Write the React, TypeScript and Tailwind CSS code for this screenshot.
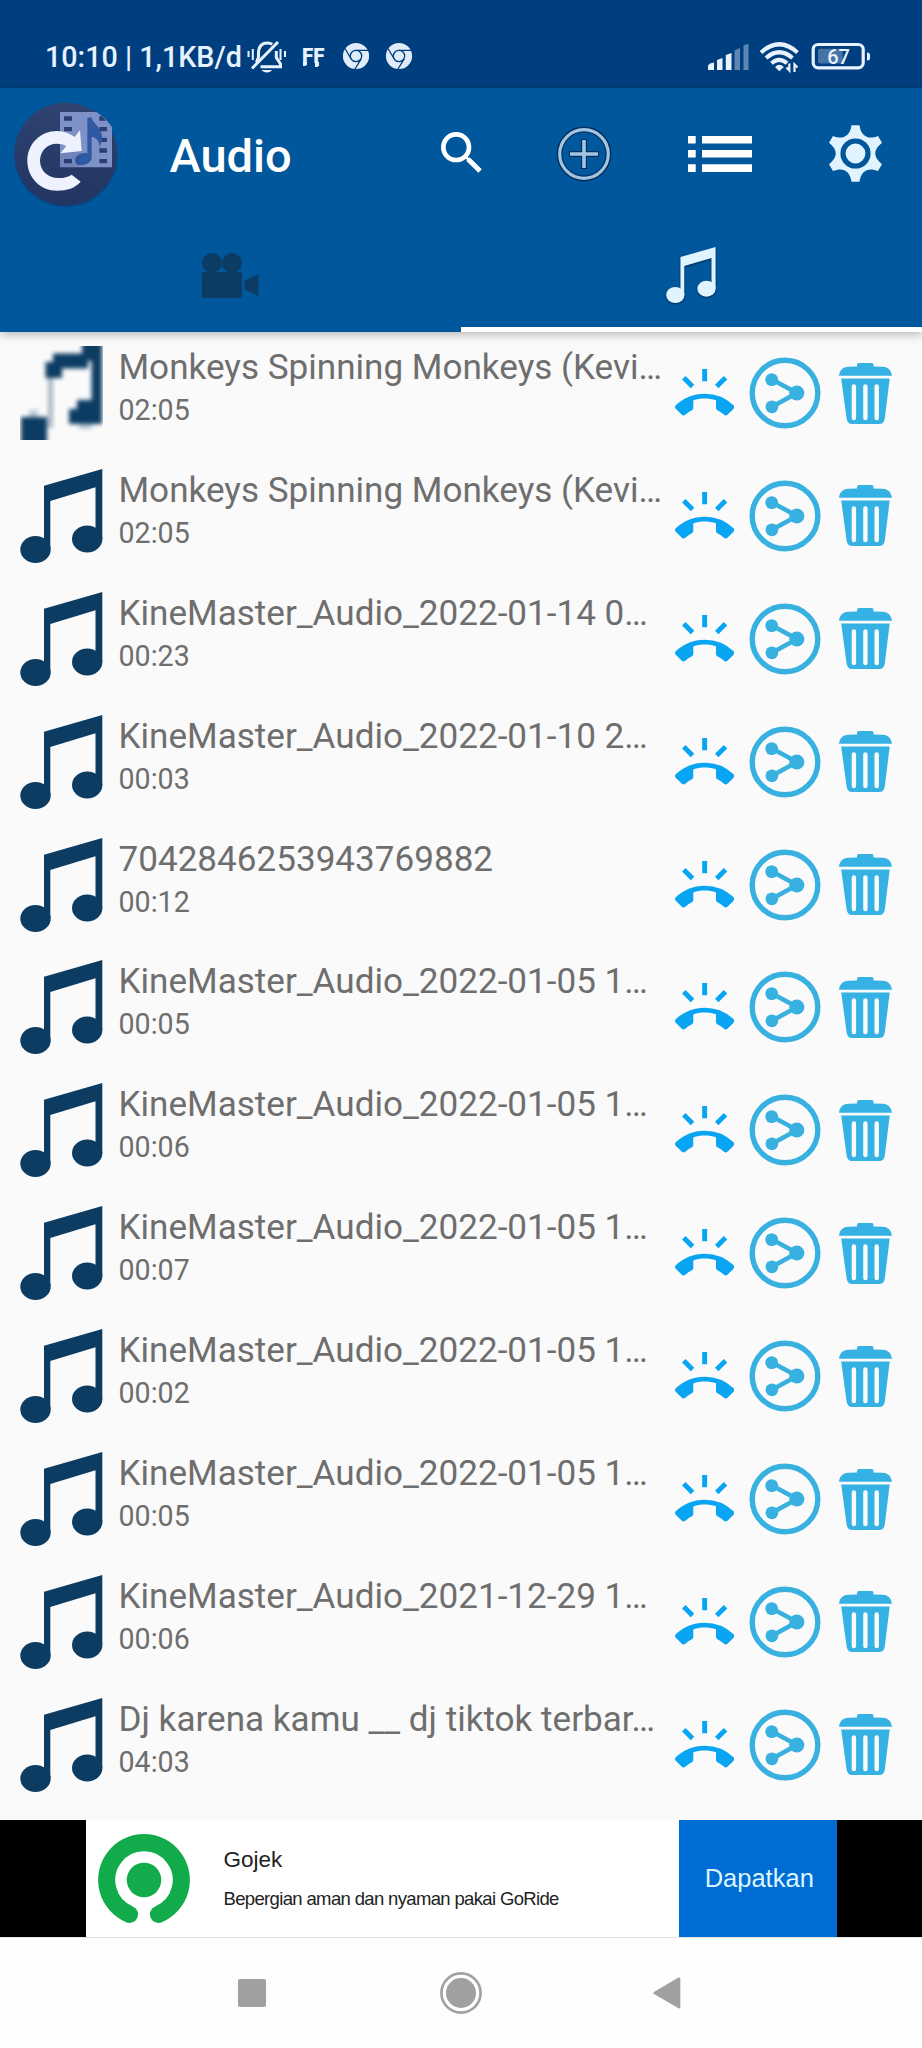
import React from "react";
import { MdRingVolume, MdSearch } from "react-icons/md";

type Track = { title: string; duration: string; lowRes?: boolean };

const tracks: Track[] = [
  { title: "Monkeys Spinning Monkeys (Kevi…", duration: "02:05", lowRes: true },
  { title: "Monkeys Spinning Monkeys (Kevi…", duration: "02:05" },
  { title: "KineMaster_Audio_2022-01-14 0…", duration: "00:23" },
  { title: "KineMaster_Audio_2022-01-10 2…", duration: "00:03" },
  { title: "7042846253943769882", duration: "00:12" },
  { title: "KineMaster_Audio_2022-01-05 1…", duration: "00:05" },
  { title: "KineMaster_Audio_2022-01-05 1…", duration: "00:06" },
  { title: "KineMaster_Audio_2022-01-05 1…", duration: "00:07" },
  { title: "KineMaster_Audio_2022-01-05 1…", duration: "00:02" },
  { title: "KineMaster_Audio_2022-01-05 1…", duration: "00:05" },
  { title: "KineMaster_Audio_2021-12-29 1…", duration: "00:06" },
  { title: "Dj karena kamu __ dj tiktok terbar…", duration: "04:03" },
];

const NoteIcon: React.FC<{ className?: string }> = ({ className }) => (
  <svg viewBox="0 0 83 94" preserveAspectRatio="none" className={className} fill="currentColor">
    <path d="M24 16.7 82.3 0V70H75.5V18.3L30.3 32V80.5H24Z" />
    <ellipse cx="15.5" cy="80.5" rx="15.2" ry="13.5" />
    <ellipse cx="67.2" cy="70" rx="15.2" ry="13.4" />
  </svg>
);

const LowResNote: React.FC = () => (
  <svg viewBox="0 0 83 94" className="w-[83px] h-[94px] shrink-0" fill="#0d3c63">
    <g className="blur-[2px]">
      <path d="M62 -4H82V78H49V63H57V54H71.5V15H68V22.500H42V32H25.500V16H33V7.500H62Z" />
      <path d="M1 71H27V98H1Z" />
      <path d="M28 32H33V82H28Z" opacity=".35" />
      <path d="M9 64H18V71H9ZM59 78H72V83H59Z" opacity=".25" />
    </g>
  </svg>
);

const ShareIcon: React.FC = () => (
  <svg viewBox="0 0 72 72" className="w-[72px] h-[72px]" fill="#38b1e0" stroke="#38b1e0">
    <circle cx="36" cy="36" r="32.8" fill="none" strokeWidth="5.4" />
    <path d="M23 22.5 48 36 23 49.8" fill="none" strokeWidth="4.6" />
    <circle cx="22.7" cy="22.6" r="6.4" stroke="none" />
    <circle cx="22.9" cy="49.8" r="6.4" stroke="none" />
    <circle cx="47.8" cy="36" r="7.6" stroke="none" />
  </svg>
);

const TrashIcon: React.FC = () => (
  <svg viewBox="0 0 53 61" className="w-[53px] h-[61px]" fill="#35b2e3">
    <path d="M0 12.8C.6 7 4 3.9 9 3.7L18 3.5V2Q18 0 20 0H33Q34.5 0 34.5 2V3.5L44 3.7C49 3.9 52.2 7 53 12.8Z" />
    <path
      fillRule="evenodd"
      d="M2.2 15.5H50.7L45.8 55.5Q45 61 40 61H13Q8.6 61 7.6 55.5ZM12.7 23.5V55A2.2 2.2 0 0 0 17.1 55V23.5A2.2 2.2 0 0 0 12.7 23.5ZM24.2 23.5V55A2.2 2.2 0 0 0 28.6 55V23.5A2.2 2.2 0 0 0 24.2 23.5ZM35.5 23.5V55A2.2 2.2 0 0 0 39.9 55V23.5A2.2 2.2 0 0 0 35.5 23.5Z"
    />
  </svg>
);

const TrackRow: React.FC<{ track: Track }> = ({ track }) => (
  <div className="flex items-start h-[122.9px] pl-5">
    {track.lowRes ? <LowResNote /> : <NoteIcon className="w-[83px] h-[94px] shrink-0 text-[#0d3c63]" />}
    <div className="w-[555px] pl-[15.5px] whitespace-nowrap text-[#6e6e6e]">
      <div className="text-[35.1px] leading-[42px]">{track.title}</div>
      <div className="text-[28.6px] leading-[44px]">{track.duration}</div>
    </div>
    <MdRingVolume className="w-[59.3px] h-[59.3px] mt-[18px] ml-[17px] shrink-0 text-[#09a5f3]" />
    <div className="mt-[11px] ml-[14.5px] shrink-0">
      <ShareIcon />
    </div>
    <div className="mt-[16.5px] ml-[18.2px] shrink-0">
      <TrashIcon />
    </div>
  </div>
);

const MutedBell: React.FC = () => (
  <svg viewBox="246 38 42 38" className="w-[42px] h-[38px]" fill="none" stroke="#e8f2ff" strokeWidth="3">
    <path d="M256.5 62.5 258.5 57V53.5C258.5 46.5 262 43 267.5 43 269.5 43 271 43.5 272.2 44.3" />
    <path d="M276.3 51V57.5L280.5 64V66.8H260.5" />
    <path d="M252 68.5 278 42" />
    <path d="M261.5 70H272C270.5 73.2 263.500 73.2 261.5 70Z" fill="#e8f2ff" stroke="none" />
    <path d="M248.5 51V57M252.8 49V60M280.5 49V60M285 51V57" strokeWidth="2" />
  </svg>
);

const ChromeMark: React.FC = () => (
  <svg viewBox="-14 -14 28 28" className="w-[28px] h-[28px]">
    <circle r="13.1" fill="#e0ecf8" />
    <g stroke="#003f7f" strokeWidth="1.3" fill="none">
      <circle r="5.7" />
      <path d="M-.5 -5.7H12M-4.8 3-11 -7.5M5.2 2.8-1 13" />
    </g>
  </svg>
);

const StatusIcons: React.FC = () => (
  <svg viewBox="706 38 168 38" className="w-[168px] h-[38px]" fill="#e8f2ff">
    <path d="M708 65.5 710 63.5 714 62.5V70H708ZM717 60 722.5 58V70H717ZM725.8 55 731.5 53V70H725.8Z" />
    <path d="M734.5 50.5 740 48V70H734.5ZM743.5 45.5 748.5 43.5V70H743.5Z" opacity=".4" />
    <g fill="none" stroke="#e8f2ff" strokeWidth="4.1">
      <path d="M761 52.5Q779.3 36 797.5 52.5" />
      <path d="M766 58Q779.3 46.5 792.5 58" />
      <path d="M771.5 63.2Q779.3 56.5 787 63.2" />
      <path d="M789.3 63.500V70.5L786.5 67.5M794.5 72V64.5L797.5 67.5" strokeWidth="2.2" />
    </g>
    <path d="M775 67Q779.3 62.5 783.8 67L779.3 71.2Z" />
    <rect x="813.2" y="44.5" width="50" height="23.3" rx="5" fill="none" stroke="#e8f2ff" strokeWidth="3.2" />
    <path d="M820 48.7H842.7V63.5H820Q818 63.5 818 61.5V50.7Q818 48.7 820 48.7Z" opacity=".3" />
    <path d="M867 52.5Q870 52.5 870 55V58Q870 60.5 867 60.5Z" />
    <text x="838.5" y="64" textAnchor="middle" className="text-[20px] font-medium">67</text>
  </svg>
);

const StatusBar: React.FC = () => (
  <div className="flex items-start h-[88px] pt-[38px] bg-[#003f7f] text-[#e8f2ff]">
    <div className="w-[201px] ml-[45px] text-[28.7px] leading-[39px] font-medium whitespace-nowrap">
      10:10 | 1,1KB/d
    </div>
    <MutedBell />
    <div className="relative ml-[14px] mt-[5.5px] w-[26px] text-[20.5px] leading-6 font-black">
      FF
      <svg viewBox="0 0 24 8" className="absolute left-0 top-[18px] w-6 h-2" fill="currentColor">
        <path d="M1 0H5V3L3 4H1ZM13 0H17V4L15 5H13Z" />
      </svg>
    </div>
    <div className="flex ml-[14px] mt-[4px] gap-[14.8px]">
      <ChromeMark />
      <ChromeMark />
    </div>
    <div className="ml-[293.2px]">
      <StatusIcons />
    </div>
  </div>
);

const AppLogo: React.FC = () => (
  <svg viewBox="0 0 390 375" className="w-[130px] h-[125px] shrink-0">
    <defs>
      <linearGradient id="disc" x1="0" y1="0" x2="0" y2="1">
        <stop offset="0" stopColor="#304270" />
        <stop offset="1" stopColor="#213462" />
      </linearGradient>
    </defs>
    <circle cx="198" cy="197" r="155" fill="#0a3c78" opacity=".6" />
    <circle cx="197" cy="192" r="154" fill="url(#disc)" />
    <path d="M180 66H289Q318 84 336 112V232H180Z" fill="#7e92c8" />
    <path
      d="M192 79H216V92H192ZM192 111H216V124H192ZM192 207H216V220H192ZM298 79H306L318 92H298ZM298 111H321V124H298ZM298 143H321V156H298ZM298 175H321V188H298ZM298 207H321V220H298Z"
      fill="#2c3e72"
    />
    <path d="M262 84 274 82C282 105 304 112 306 140 306 155 302 164 299 170 297 150 290 144 275 140V205C272 220 255 226 240 226 226 226 222 212 228 202 234 192 250 187 262 190Z" fill="#3059a3" />
    <path d="M180 188 245 184 235 236H180Z" fill="#2c3e72" opacity=".15" />
    <path
      d="M215 254C205 261 192 264 175 264 145 264 120 242 120 212 120 182 143 161 170 161 182 161 190 163 199 168L181 190 245 183 240 120 224 141C208 129 190 123 172 123 120 123 82 163 82 212 82 262 120 302 172 302 201 302 225 294 242 275Z"
      fill="#edf2fe"
    />
  </svg>
);

const Toolbar: React.FC = () => (
  <div className="flex items-start h-[132px] pt-0.5 text-white">
    <AppLogo />
    <div className="w-[304px] pl-[39.5px] pt-[38px] text-[47px] leading-[56px] font-medium">Audio</div>
    <MdSearch className="w-[56px] h-[56px] mt-[35px] shrink-0" />
    <svg viewBox="-28 -28 56 56" className="w-[56px] h-[56px] mt-[36px] ml-[66px] shrink-0" fill="none">
      <circle r="24.5" stroke="#04305f" strokeWidth="5.8" />
      <path d="M-15 0H15M0 -15V15" stroke="#04305f" strokeWidth="6" />
      <circle r="24.3" stroke="#a3c5e4" strokeWidth="3.2" />
      <path d="M-14 0H14M0 -14V14" stroke="#a3c5e4" strokeWidth="3.6" />
    </svg>
    <svg viewBox="0 0 64 36" className="w-[64px] h-[36px] mt-[45.7px] ml-[76px] shrink-0" fill="#fff">
      <path d="M0 0H7.7V7.5H0ZM14 0H64V7.5H14ZM0 14H7.7V21.5H0ZM14 14H64V21.5H14ZM0 28.2H7.7V36H0ZM14 28.2H64V36H14Z" />
    </svg>
    <svg viewBox="-28.5 -28.5 57 57" className="w-[57px] h-[57px] mt-[35.2px] ml-[75px] shrink-0" fill="#e0f3ff">
      <path d="M-4 -28.3H4C5.5 -17 13 -13.5 22.5 -17.6L26.5 -10.7C17.5 -3.7 17.5 3.7 26.5 10.7L22.5 17.6C13 13.5 5.5 17 4 28.3H-4C-5.5 17 -13 13.5 -22.5 17.6L-26.5 10.7C-17.5 3.7 -17.5 -3.7 -26.5 -10.7L-22.5 -17.6C-13 -13.5 -5.5 -17 -4 -28.3Z" />
      <circle r="12.5" fill="none" stroke="#00579c" strokeWidth="5.2" />
    </svg>
  </div>
);

const Tabs: React.FC = () => (
  <div className="grid grid-cols-2 h-[112px]">
    <div className="flex justify-center pt-[33px]">
      <svg viewBox="0 0 57 45" className="w-[57px] h-[45px]" fill="#0c3c64">
        <circle cx="10" cy="10" r="10" />
        <circle cx="30" cy="10" r="10" />
        <path d="M0 20Q0 19 1 19H39Q40 19 40 20V44Q40 45 39 45H1Q0 45 0 44ZM42.5 27.5 56.5 21V43L42.5 36.5Z" />
      </svg>
    </div>
    <div className="flex justify-center pt-[27px] pr-px border-b-[5px] border-white">
      <NoteIcon className="w-[50px] h-[56px] text-[#e0f4ff] drop-shadow-[0_1px_1px_rgba(0,20,60,0.7)]" />
    </div>
  </div>
);

const AdBanner: React.FC = () => (
  <div className="flex h-[117px] justify-center bg-black font-['Liberation_Sans']">
    <div className="flex w-[593.5px] bg-white text-[#222]">
      <svg viewBox="-47 -47 94 94" className="w-[94px] h-[94px] mt-[13.3px] ml-[11.5px] shrink-0">
        <path d="M-14.6 34.3A37.3 37.3 0 1 1 14.6 34.3" fill="none" stroke="#11ab4b" strokeWidth="17.2" strokeLinecap="round" />
        <circle r="17.3" fill="#11ab4b" />
      </svg>
      <div className="pl-[32.5px] pt-[26px] whitespace-nowrap">
        <div className="text-[22.5px] leading-[28px]">Gojek</div>
        <div className="mt-[9.5px] text-[18.5px] leading-[30px] tracking-[-0.65px]">Bepergian aman dan nyaman pakai GoRide</div>
      </div>
    </div>
    <div className="w-[157.5px] pt-[42px] pl-[3px] bg-[#006dd5] text-center text-[25.5px] leading-[32px] text-[#dcf5ff]">
      Dapatkan
    </div>
  </div>
);

const NavBar: React.FC = () => (
  <div className="flex items-center h-[111px] border-t border-[#e4e4e4] bg-[#fefefe]">
    <div className="w-[28px] h-[28px] ml-[238px] rounded-[2px] bg-[#a0a0a0]" />
    <svg viewBox="-21 -21 42 42" className="w-[42px] h-[42px] ml-[174px]" fill="#a0a0a0">
      <circle r="19.6" fill="none" stroke="#a0a0a0" strokeWidth="2.6" />
      <circle r="15" />
    </svg>
    <svg viewBox="0 0 28 32" className="w-[28px] h-[32px] ml-[171px]" fill="#a0a0a0">
      <path d="M25.5 .6Q27.3 0 27.3 2V30Q27.3 32 25.5 31.3L1 17Q-.5 16 1 15Z" />
    </svg>
  </div>
);

export default function App() {
  return (
    <div className="w-[922px] h-[2048px] flex flex-col overflow-hidden bg-[#fafafa] font-['Roboto',sans-serif]">
      <StatusBar />
      <div className="bg-[#00579c] shadow-[0_2px_10px_rgba(0,0,0,0.3)]">
        <Toolbar />
        <Tabs />
      </div>
      <div className="h-[1488px] pt-[14px] overflow-hidden">
        {tracks.map((track, i) => (
          <TrackRow key={i} track={track} />
        ))}
      </div>
      <AdBanner />
      <NavBar />
    </div>
  );
}
